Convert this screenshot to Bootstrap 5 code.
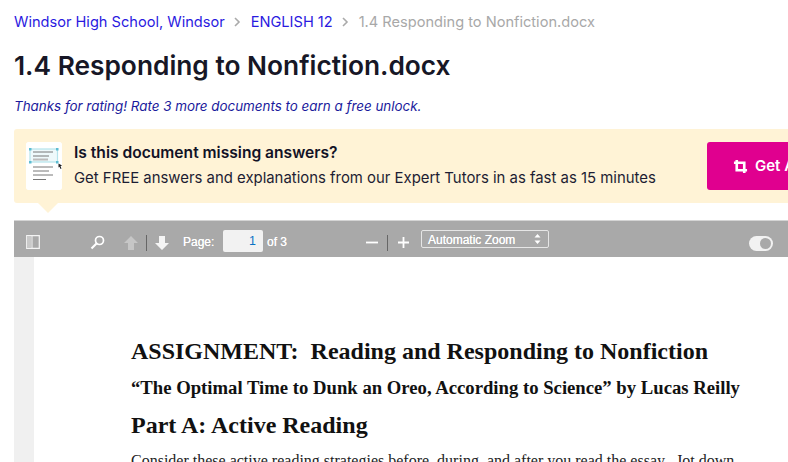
<!DOCTYPE html>
<html lang="en"><head><meta charset="utf-8"><title>1.4 Responding to Nonfiction.docx</title>
<link href="https://cdn.jsdelivr.net/npm/bootstrap@5.3.0/dist/css/bootstrap.min.css" rel="stylesheet">
<style>
html,body{width:788px;height:462px;overflow:hidden}
body{font-family:Inter,"Liberation Sans",sans-serif;color:#1b1b2e;background:#fff}
.page-wrap{padding:13px 0 0 14px;width:900px}
.crumbs{font-size:14.6px;line-height:18px;margin:0;gap:7px}
.crumbs a{color:#2a1ae0;text-decoration:none}
.crumbs .sep{color:#aaa;width:12px;display:flex;justify-content:center}
.crumbs .cur{color:#a8a8a8}
.doc-title{font-size:26.3px;font-weight:600;line-height:36px;margin:17px 0 0;color:#171726}
.rated{font-size:13.4px;font-style:italic;color:#1a1a9c;line-height:18px;margin:13px 0 0}
.banner{position:relative;background:#fff3d6;height:74px;border-radius:3px 0 0 3px;margin-top:14px;padding:13px 0 13px 12px;width:874px}
.banner::after{content:"";position:absolute;left:24px;top:74px;border-style:solid;border-width:10px 10px 0;border-color:#fff3d6 transparent transparent}
.thumb{width:36px;height:48px;background:#fff;border-radius:3px;flex:none}
.b-title{font-size:15.6px;font-weight:600;line-height:20px;margin-top:1px;color:#121226}
.b-text{font-size:14.9px;line-height:20px;margin-top:5px;color:#1d1d33}
.b-copy{margin-left:12px;width:633px;flex:none}
.btn-get{background:#e0008f;color:#fff;font-weight:600;font-size:15px;border-radius:3px;height:48px;width:160px;border:0;padding:0 0 0 26px;gap:7px;flex:none}
.viewer{margin-top:17px;height:242px;width:874px;background:#fff;overflow:hidden}
.tbar{height:37px;background:#a9a9a9;border-top:1px solid #d4d4d4;position:relative;font-family:"Liberation Sans",sans-serif;color:#fff;font-size:12px;font-weight:400;text-shadow:0 0 .6px #fff}
.tbar>*{position:absolute}
.tb-page{left:209px;top:9px;width:40px;height:22px;background:#f2f2f2;border-radius:2px;color:#0a72c4;text-align:right;padding-right:7px;font-size:12.5px;line-height:22px}
.tb-sel{left:407px;top:9px;width:128px;height:18px;border:1px solid #e6e6e6;border-radius:2px;line-height:18px;padding-left:6px;font-size:12px}
.tb-div{width:1px;background:#666;height:16px}
.tb-toggle{left:735px;top:15px;width:24px;height:15px;background:#f2f2f2;border-radius:8px}
.tb-toggle::after{content:"";position:absolute;right:2px;top:2px;width:11px;height:11px;border-radius:50%;background:#a9a9a9}
.pane{height:205px;display:flex}
.gutter{width:20px;background:#f0f0f0;flex:none}
.sheet{padding:78px 0 0 97px;font-family:"Liberation Serif",serif;color:#111;font-weight:700;flex:1;white-space:nowrap}
.sheet p{margin:0}
.d1{font-size:24px;line-height:32px}
.d2{font-size:18.7px;line-height:26px;margin-top:8px!important}
.d3{font-size:24px;line-height:32px;margin-top:8px!important}
.d4{font-size:16px;font-weight:400;line-height:18px;margin-top:11px!important;color:#222}
</style></head>
<body>
<div class="page-wrap">
<nav class="crumbs d-flex align-items-center">
<a href="#">Windsor High School, Windsor</a><span class="sep"><svg width="7" height="10" viewBox="0 0 7 10"><path d="M1 1l4 4-4 4" fill="none" stroke="#aaa" stroke-width="1.6"/></svg></span>
<a href="#">ENGLISH 12</a><span class="sep"><svg width="7" height="10" viewBox="0 0 7 10"><path d="M1 1l4 4-4 4" fill="none" stroke="#aaa" stroke-width="1.6"/></svg></span>
<span class="cur">1.4 Responding to Nonfiction.docx</span>
</nav>
<h1 class="doc-title">1.4 Responding to Nonfiction.docx</h1>
<p class="rated">Thanks for rating! Rate 3 more documents to earn a free unlock.</p>
<div class="banner d-flex align-items-start">
<svg class="thumb" viewBox="0 0 36 48"><rect width="36" height="48" rx="3" fill="#fff"/><rect x="4" y="7" width="27.500" height="13" fill="#eef9fb" stroke="#b5e3ec" stroke-width="1.200"/><path d="M7 10h20M7 14h16" stroke="#777"/><path d="M7 17.500h15" stroke="#bbb" stroke-width="2"/><path d="M7 25h20M7 29h16M7 33h20M7 37.500h13" stroke="#777"/><g fill="#5dbcd2"><rect x="3" y="6" width="2.500" height="2.500"/><rect x="30" y="6" width="2.500" height="2.500"/><rect x="3" y="19" width="2.500" height="2.500"/><rect x="30" y="19" width="2.500" height="2.500"/></g><path d="M32.500 21.500l3.500 2-1.500.8 1 2.200-1 .5-1-2.300-1 .8z" fill="#222"/></svg>
<div class="b-copy"><div class="b-title">Is this document missing answers?</div><div class="b-text">Get FREE answers and explanations from our Expert Tutors in as fast as 15 minutes</div></div>
<button class="btn-get d-flex align-items-center"><svg width="15" height="15" viewBox="0 0 16 16"><path d="M4 1v11h11M1 4h11v11" fill="none" stroke="#fff" stroke-width="2.8"/></svg><span>Get Answers</span></button>
</div>
<div class="viewer">
<div class="tbar">
<svg style="left:12px;top:14px" width="14" height="14" viewBox="0 0 14 14"><path d="M.7.7h12.6v12.6H.7z" fill="none" stroke="#f4f4f4" stroke-width="1.200"/><path d="M1 1h4v12H1z" fill="#c9c9c9"/><path d="M6 1v12" stroke="#f4f4f4"/></svg>
<svg style="left:76px;top:14px" width="15" height="15" viewBox="0 0 15 15"><circle cx="9.500" cy="5.500" r="4" fill="none" stroke="#fff" stroke-width="1.700"/><path d="M6.500 8.500L1.500 13.500" stroke="#fff" stroke-width="2.200"/></svg>
<svg style="left:109px;top:14px" width="16" height="16" viewBox="0 0 16 16"><path d="M8 1l7 7h-4v7H5V8H1z" fill="#c6c6c6"/></svg>
<span class="tb-div" style="left:132px;top:14px"></span>
<svg style="left:140px;top:14px" width="16" height="16" viewBox="0 0 16 16"><path d="M8 15l7-7h-4V1H5v7H1z" fill="#f4f4f4"/></svg>
<span style="left:169px;top:14px;line-height:14px">Page:</span>
<span class="tb-page">1</span>
<span style="left:253px;top:14px;line-height:14px">of 3</span>
<svg style="left:352px;top:20px" width="12" height="3" viewBox="0 0 12 3"><path d="M0 1.500h12" stroke="#fff" stroke-width="1.800"/></svg>
<span class="tb-div" style="left:373px;top:14px"></span>
<svg style="left:384px;top:16px" width="11" height="11" viewBox="0 0 11 11"><path d="M0 5.500h11M5.500 0v11" stroke="#fff" stroke-width="1.800"/></svg>
<span class="tb-sel">Automatic Zoom<svg style="position:absolute;right:7px;top:3px" width="7" height="10" viewBox="0 0 7 10"><path d="M3.500 0L6.500 3.500H.5zM3.500 10L.5 6.500h6z" fill="#fff"/></svg></span>
<span class="tb-toggle"></span>
</div>
<div class="pane"><div class="gutter"></div><div class="sheet">
<p class="d1">ASSIGNMENT:&nbsp; Reading and Responding to Nonfiction</p>
<p class="d2">“The Optimal Time to Dunk an Oreo, According to Science” by Lucas Reilly</p>
<p class="d3">Part A: Active Reading</p>
<p class="d4">Consider these active reading strategies before, during, and after you read the essay.&nbsp; Jot down</p>
</div></div>
</div>
</div>
</body></html>
